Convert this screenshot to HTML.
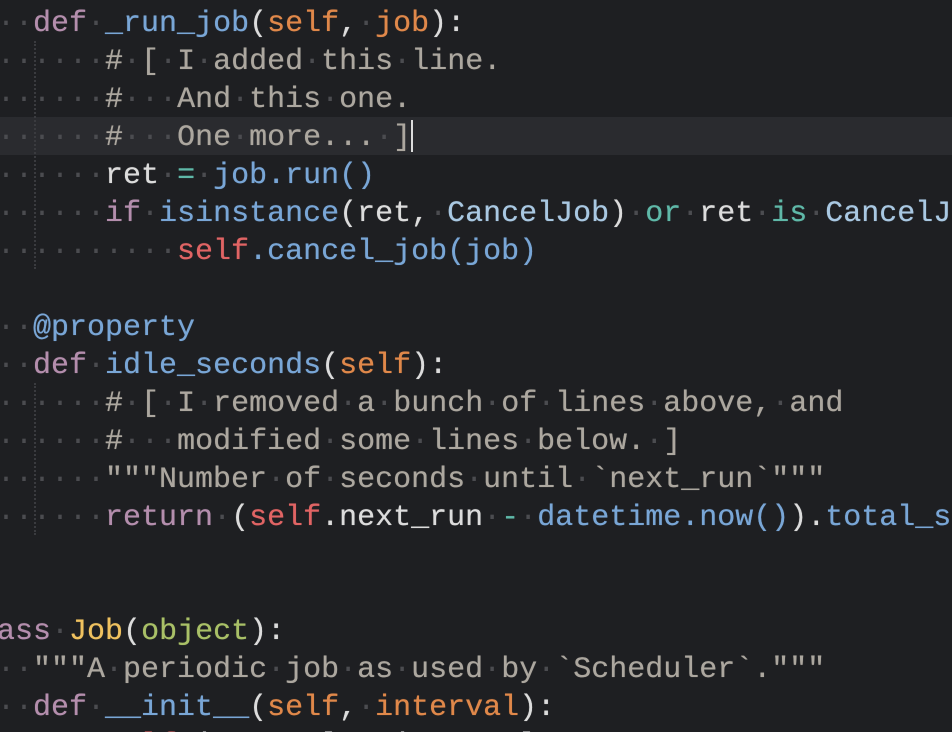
<!DOCTYPE html>
<html><head><meta charset="utf-8"><style>
html,body{margin:0;padding:0;background:#1e1f22;width:952px;height:732px;overflow:hidden}
.wrap{position:relative;width:952px;height:732px;overflow:hidden}
.code{position:absolute;left:-39px;top:5px;font-family:"Liberation Mono",monospace;font-size:30px;line-height:38px;color:#dcdcdc;text-shadow:0 0 0.6px currentColor}
.l{height:38px;white-space:pre}
.hl{position:absolute;left:0;top:117px;width:952px;height:38px;background:#2a2b2f}
i{font-style:normal;color:#4b4c50;text-shadow:none}
.k{color:#b48ead}.f{color:#79a6d6}.p{color:#e0884a}.r{color:#e06464}.c{color:#aca79f}.t{color:#5fb8a8}.n{color:#a9c8e2}.y{color:#efc15f}.g{color:#a9c067}
.cur{display:inline-block;width:2px;height:32px;background:#ddd;vertical-align:-7px}
.guide{position:absolute;left:34px;border-left:2px dotted #3a3b3f}
</style></head><body><div class="wrap">
<div class="hl"></div>
<div class="guide" style="top:41px;height:228px"></div>
<div class="guide" style="top:383px;height:152px"></div>
<div class="code"><div class="l"><i>····</i><span class="k">def</span><i>·</i><span class="f">_run_job</span>(<span class="p">self</span>,<i>·</i><span class="p">job</span>):</div><div class="l"><i>········</i><span class="c">#<i>·</i>[<i>·</i>I<i>·</i>added<i>·</i>this<i>·</i>line.</span></div><div class="l"><i>········</i><span class="c">#<i>···</i>And<i>·</i>this<i>·</i>one.</span></div><div class="l"><i>········</i><span class="c">#<i>···</i>One<i>·</i>more...<i>·</i>]</span><span class="cur"></span></div><div class="l"><i>········</i>ret<i>·</i><span class="t">=</span><i>·</i><span class="f">job.run()</span></div><div class="l"><i>········</i><span class="k">if</span><i>·</i><span class="f">isinstance</span>(ret,<i>·</i><span class="n">CancelJob</span>)<i>·</i><span class="t">or</span><i>·</i>ret<i>·</i><span class="t">is</span><i>·</i><span class="n">CancelJob</span>:</div><div class="l"><i>············</i><span class="r">self</span><span class="f">.cancel_job(job)</span></div><div class="l"></div><div class="l"><i>····</i><span class="f">@property</span></div><div class="l"><i>····</i><span class="k">def</span><i>·</i><span class="f">idle_seconds</span>(<span class="p">self</span>):</div><div class="l"><i>········</i><span class="c">#<i>·</i>[<i>·</i>I<i>·</i>removed<i>·</i>a<i>·</i>bunch<i>·</i>of<i>·</i>lines<i>·</i>above,<i>·</i>and</span></div><div class="l"><i>········</i><span class="c">#<i>···</i>modified<i>·</i>some<i>·</i>lines<i>·</i>below.<i>·</i>]</span></div><div class="l"><i>········</i><span class="c">"""Number<i>·</i>of<i>·</i>seconds<i>·</i>until<i>·</i>`next_run`"""</span></div><div class="l"><i>········</i><span class="k">return</span><i>·</i>(<span class="r">self</span>.next_run<i>·</i><span class="t">-</span><i>·</i><span class="f">datetime.now()</span>).<span class="f">total_seconds()</span></div><div class="l"></div><div class="l"></div><div class="l"><span class="k">class</span><i>·</i><span class="y">Job</span>(<span class="g">object</span>):</div><div class="l"><i>····</i><span class="c">"""A<i>·</i>periodic<i>·</i>job<i>·</i>as<i>·</i>used<i>·</i>by<i>·</i>`Scheduler`."""</span></div><div class="l"><i>····</i><span class="k">def</span><i>·</i><span class="f">__init__</span>(<span class="p">self</span>,<i>·</i><span class="p">interval</span>):</div><div class="l"><i>········</i><span class="r">self</span>.interval<i>·</i><span class="t">=</span><i>·</i>interval</div></div>
</div></body></html>
